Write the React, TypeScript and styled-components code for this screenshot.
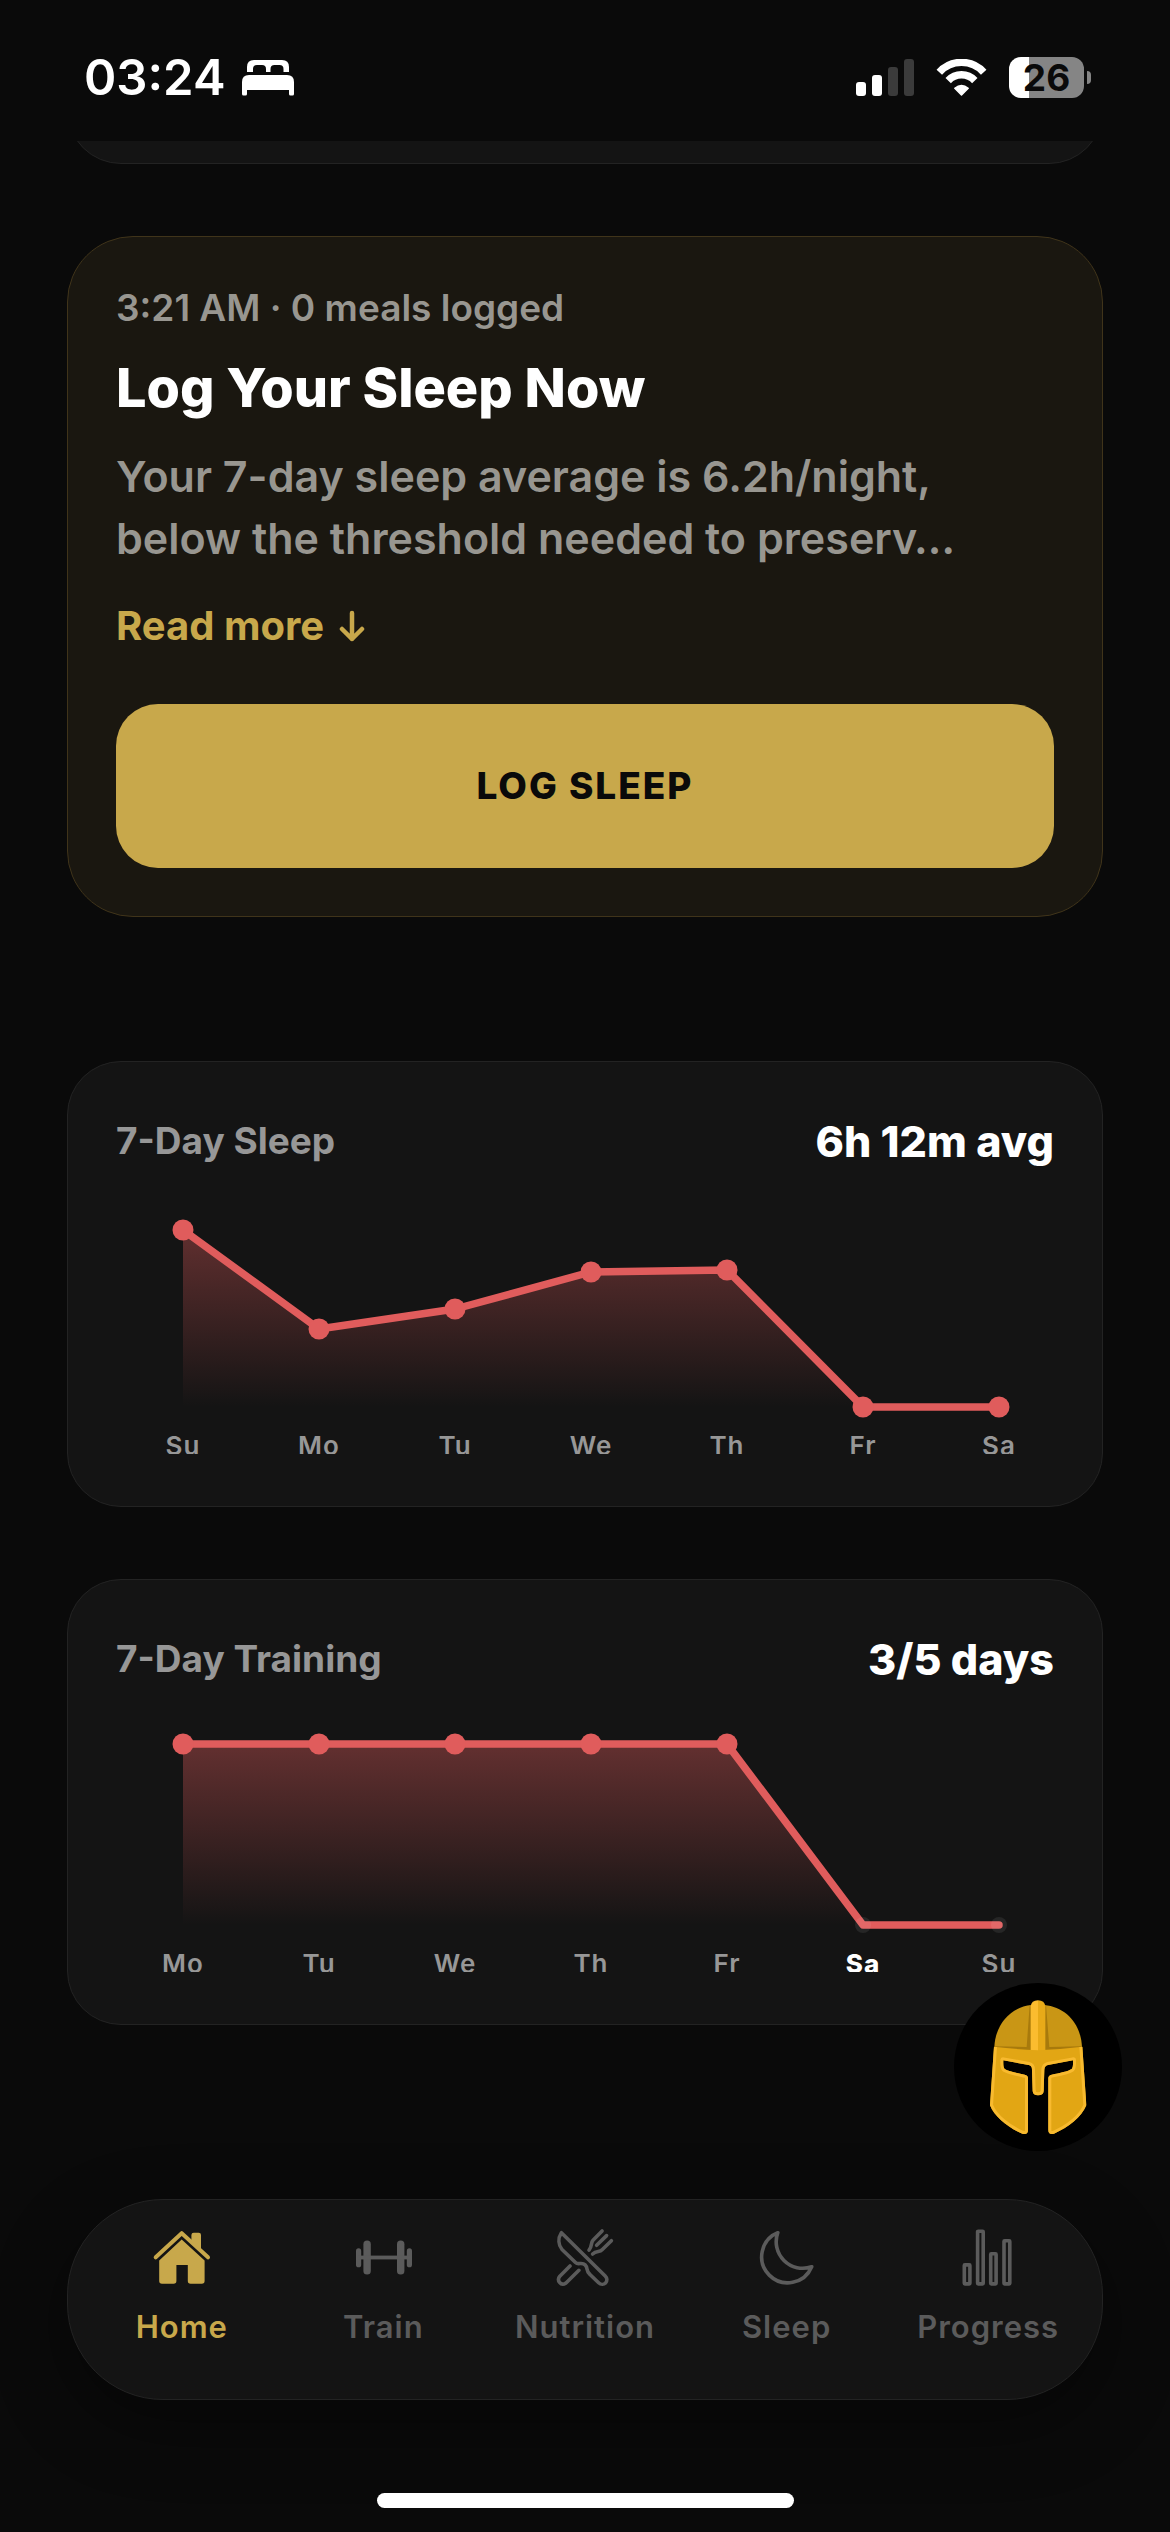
import React from "react";
import styled, { createGlobalStyle } from "styled-components";

const color = {
  page: "#0a0a0a",
  card: "#141414",
  line: "#232323",
  gold: "#c8a84b",
  heroBg: "#1a1710",
  heroLine: "#40341a",
  muted: "#979797",
  mutedWarm: "#989690",
  dim: "#5b5b5b",
  red: "#e05c5c",
  white: "#ffffff",
};

const GlobalStyle = createGlobalStyle`
  *, *::before, *::after { box-sizing: border-box; }
  body {
    margin: 0;
    background: ${color.page};
    color: ${color.white};
    font-family: Inter, "Liberation Sans", sans-serif;
  }
  h1, h2, p { margin: 0; }
  button { font-family: inherit; border: 0; padding: 0; cursor: pointer; }
`;

const Screen = styled.div`
  min-height: 100vh;
  display: flex;
  flex-direction: column;
`;

const StatusBar = styled.header`
  height: 141px;
  padding: 14px 79px 0 84px;
  display: flex;
  align-items: center;
  justify-content: space-between;
`;

const StatusGroup = styled.div<{ $gap: number }>`
  display: flex;
  align-items: center;
  gap: ${(p) => p.$gap}px;
`;

const Clock = styled.time`
  font-size: 49px;
  line-height: 60px;
  font-weight: 600;
`;

const Battery = styled.div`
  display: flex;
  align-items: center;
  gap: 3px;
`;

const BatteryBody = styled.div<{ $level: number }>`
  width: 75px;
  height: 41px;
  border-radius: 12px;
  background: linear-gradient(
    to right,
    ${color.white} ${(p) => p.$level}%,
    #858585 ${(p) => p.$level}%
  );
  color: ${color.page};
  font-size: 37px;
  line-height: 42px;
  font-weight: 700;
  text-align: center;
`;

const BatteryTip = styled.div`
  width: 4px;
  height: 13px;
  border-radius: 0 4px 4px 0;
  background: #858585;
`;

const Main = styled.main`
  padding: 0 67px;
  display: flex;
  flex-direction: column;
`;

const ScrolledAway = styled.div`
  height: 23px;
  overflow: hidden;
  display: flex;
  align-items: flex-end;
  margin-bottom: 72px;
`;

const Card = styled.section`
  width: 100%;
  background: ${color.card};
  border: 1px solid ${color.line};
  border-radius: 54px;
`;

const EmptyCard = styled(Card)`
  flex: none;
  height: 140px;
`;

const HeroCard = styled(Card)`
  padding: 48px;
  display: flex;
  flex-direction: column;
  align-items: flex-start;
  background: ${color.heroBg};
  border-color: ${color.heroLine};
  border-radius: 66px;
  margin-bottom: 144px;
`;

const Meta = styled.p`
  color: ${color.mutedWarm};
  font-size: 37px;
  line-height: 46px;
  font-weight: 600;
`;

const HeroTitle = styled.h1`
  margin-top: 24px;
  font-size: 54px;
  line-height: 66px;
  font-weight: 800;
`;

const HeroText = styled.p`
  margin-top: 24px;
  max-width: 900px;
  color: ${color.mutedWarm};
  font-size: 43px;
  line-height: 62px;
  font-weight: 600;
`;

const ReadMore = styled.button`
  margin-top: 34px;
  display: flex;
  align-items: center;
  gap: 15px;
  background: none;
  color: ${color.gold};
  font-size: 40px;
  line-height: 46px;
  font-weight: 700;
`;

const PrimaryButton = styled.button`
  margin-top: 55px;
  width: 100%;
  height: 164px;
  border-radius: 42px;
  background: ${color.gold};
  color: ${color.page};
  font-size: 37px;
  line-height: 46px;
  font-weight: 800;
  letter-spacing: 2px;
`;

const ChartCard = styled(Card)`
  padding: 48px 48px 52px;
  & + & { margin-top: 72px; }
`;

const ChartHeader = styled.div`
  display: flex;
  align-items: center;
  justify-content: space-between;
  line-height: 62px;
`;

const ChartTitle = styled.h2`
  color: ${color.muted};
  font-size: 37px;
  font-weight: 700;
`;

const ChartValue = styled.strong`
  font-size: 43px;
  font-weight: 800;
`;

const Plot = styled.svg`
  display: block;
  width: 100%;
  height: auto;
`;

const DayLabel = styled.text<{ $active: boolean }>`
  fill: ${(p) => (p.$active ? color.white : color.muted)};
  font-size: 26px;
  font-weight: ${(p) => (p.$active ? 800 : 600)};
  letter-spacing: 1px;
  text-anchor: middle;
`;

const Footer = styled.footer`
  position: relative;
  margin-top: auto;
  padding: 174px 67px 24px;
  display: flex;
  flex-direction: column;
  align-items: center;
`;

const TabBar = styled.nav`
  width: 100%;
  height: 201px;
  padding: 28px 13px 0;
  display: grid;
  grid-template-columns: repeat(5, 1fr);
  align-items: start;
  background: ${color.card};
  border: 1px solid ${color.line};
  border-radius: 96px;
  box-shadow: 0 24px 72px rgba(0, 0, 0, 0.4);
`;

const Tab = styled.a<{ $active?: boolean }>`
  display: flex;
  flex-direction: column;
  align-items: center;
  gap: 21px;
  color: ${(p) => (p.$active ? color.gold : color.dim)};
  font-size: 31px;
  line-height: 36px;
  font-weight: 600;
  letter-spacing: 1px;
  text-decoration: none;
`;

const CoachButton = styled.button`
  position: absolute;
  top: -42px;
  right: 48px;
  width: 168px;
  height: 168px;
  border-radius: 50%;
  background: #000;
`;

const HomeIndicator = styled.div`
  margin-top: 93px;
  width: 417px;
  height: 15px;
  border-radius: 8px;
  background: ${color.white};
`;

const BedIcon = () => (
  <svg width="52" height="36" viewBox="0 0 52 36" fill="#fff" aria-label="Sleep focus">
    <path d="M5 12V7q0-7 7-7h28q7 0 7 7v5h-5.500V9q0-4-4-4h-5q-4 0-4 4v3h-4.500V9q0-4-4-4h-5q-4 0-4 4v3z" />
    <path d="M0 34V22q0-7 7-7h38q7 0 7 7v12q0 1.500-1.500 1.500h-2q-1.500 0-1.500-1.500v-4H5v4q0 1.500-1.500 1.500h-2Q0 35.500 0 34z" />
  </svg>
);

const SignalIcon = () => (
  <svg width="58" height="37" viewBox="0 0 58 37" fill="#fff" aria-label="Signal">
    <rect x="0" y="23" width="10" height="14" rx="3" />
    <rect x="16" y="16" width="10" height="21" rx="3" />
    <rect x="32" y="8" width="10" height="29" rx="3" fill="#3b3b3b" />
    <rect x="48" y="0" width="10" height="37" rx="3" fill="#3b3b3b" />
  </svg>
);

const WifiIcon = () => (
  <svg width="51" height="37" viewBox="0 0 51 37" aria-label="Wi-Fi">
    <g fill="none" stroke="#fff" strokeWidth="7.400">
      <path d="M3.300 13.200A30 30 0 0 1 47.700 13.200" />
      <path d="M12.200 21.600A18.200 18.200 0 0 1 38.800 21.600" />
    </g>
    <path
      d="M25.500 36L18.800 29.300Q25.500 23.600 32.200 29.300Z"
      fill="#fff"
      stroke="#fff"
      strokeWidth="1.500"
      strokeLinejoin="round"
    />
  </svg>
);

const ArrowDown = () => (
  <svg width="26" height="32" viewBox="0 0 26 32" fill="none" stroke="currentColor" strokeWidth="4.500" strokeLinecap="round" strokeLinejoin="round" aria-hidden="true">
    <path d="M13 3V29M3 19L13 29L23 19" />
  </svg>
);

const TabIcon = ({ children }: { children: React.ReactNode }) => (
  <svg
    width="60"
    height="60"
    viewBox="0 0 60 60"
    fill="none"
    stroke="currentColor"
    strokeWidth="3.600"
    strokeLinecap="round"
    strokeLinejoin="round"
    aria-hidden="true"
  >
    {children}
  </svg>
);

const HomeIcon = () => (
  <TabIcon>
    <g fill="currentColor" stroke="none">
      <path d="M29.700 11.500L52.600 32.500V53q0 2.800-2.800 2.800H38.600q-2.800 0-2.800-2.800V37H24.400v16q0 2.800-2.800 2.800H10q-2.800 0-2.800-2.800V32.500z" />
      <path d="M39.400 13V7q0-2.300 2.300-2.300h5Q49 4.700 49 7v16z" />
    </g>
    <path d="M3.700 29.300L29.700 5.200L56 29.300" strokeWidth="4" />
  </TabIcon>
);

const TrainIcon = () => (
  <TabIcon>
    <g fill="currentColor" stroke="none">
      <rect x="3" y="20.300" width="5.200" height="19" rx="2.600" />
      <rect x="10.400" y="12.600" width="7.400" height="34" rx="3.600" />
      <rect x="44" y="12.600" width="7.400" height="34" rx="3.600" />
      <rect x="53.800" y="20.300" width="5.200" height="19" rx="2.600" />
      <rect x="5" y="27.600" width="52" height="3.800" />
    </g>
  </TabIcon>
);

const NutritionIcon = () => (
  <TabIcon>
    <path d="M6.400 4.700C2.600 10.500 3.500 17 7 21.500L20.500 34.500Q22 36 25 35.500C30 35 31.500 37.500 32 41Q32.500 44.500 35 46.500L43.600 54.700C46 57 49 56.500 50.500 55C52.500 52.800 52.200 50 50.200 48Z" />
    <path d="M15 38L4.800 48.200C1.500 52 5.500 58.800 11 55L23.900 42.300" />
    <path d="M47.100 3L38 12.300C35.500 15 37.500 18 34 22.200" />
    <path d="M56.400 12.700L47.100 21.800C44.500 24.500 41.500 22.300 37.600 26" />
    <path d="M51.600 7.600L41.600 17.300" />
  </TabIcon>
);

const SleepIcon = () => (
  <TabIcon>
    <path d="M20.800 4.700A26 26 0 1 0 54.700 38.700A26.500 26.500 0 0 1 20.800 4.700Z" />
  </TabIcon>
);

const ProgressIcon = () => (
  <TabIcon>
    <rect x="6.300" y="36.900" width="5.600" height="19" rx="0.600" />
    <rect x="19.600" y="3.200" width="5.600" height="52.700" rx="0.600" />
    <rect x="32.700" y="25.800" width="5.400" height="30.100" rx="0.600" />
    <rect x="46" y="12.800" width="5.800" height="43.100" rx="0.600" />
  </TabIcon>
);

const facePath =
  "M547 319L559 495C545 530 505 562 462 580Q445 585 445 568V414Q445 405 455 403C480 398 504 393 515 386Q520 381 519 360L444 374Q434 376 433 388L431 452Q430 465 414 465Q399 465 398 452L396 388Q396 376 386 374L310 360Q309 381 314 386C325 393 350 398 374 403Q384 405 384 414V568Q384 585 367 580C324 562 284 530 270 495L282 319";

const HelmetIcon = () => (
  <svg width="168" height="168" viewBox="162 128 504 504" aria-hidden="true">
    <defs>
      <clipPath id="helmet-face">
        <path d={facePath + "Q350 327 414 330Q480 327 547 319Z"} />
      </clipPath>
    </defs>
    <path d="M283 324C284 255 330 200 395 194H433C500 200 545 255 546 324Z" fill="#c99615" />
    <path d="M389 194L380 320L286 318L283 327L414 334L546 327L543 318L448 320L438 194Z" fill="#a87a0c" />
    <path d="M392 332V198Q394 180 414 180V332Z" fill="#fbbc2f" />
    <path d="M414 332V180Q434 180 436 198V332Z" fill="#e8aa18" />
    <path d={facePath + "Q350 327 414 330Q480 327 547 319Z"} fill="#e2a614" />
    <path
      d={facePath}
      fill="none"
      stroke="#f8ba2f"
      strokeWidth="18"
      strokeLinejoin="round"
      clipPath="url(#helmet-face)"
    />
  </svg>
);

type Point = { day: string; y: number; faint?: boolean; active?: boolean };

const sleepWeek: Point[] = [
  { day: "Su", y: 58 },
  { day: "Mo", y: 157 },
  { day: "Tu", y: 137 },
  { day: "We", y: 100 },
  { day: "Th", y: 98 },
  { day: "Fr", y: 235 },
  { day: "Sa", y: 235 },
];

const trainingWeek: Point[] = [
  { day: "Mo", y: 54 },
  { day: "Tu", y: 54 },
  { day: "We", y: 54 },
  { day: "Th", y: 54 },
  { day: "Fr", y: 54 },
  { day: "Sa", y: 235, faint: true, active: true },
  { day: "Su", y: 235, faint: true },
];

const plotX = (index: number) => 67 + index * 136;

const WeekChart = ({ id, title, value, points }: { id: string; title: string; value: string; points: Point[] }) => {
  const line = points.map((p, i) => `${plotX(i)},${p.y}`).join(" ");
  const area = `${plotX(0)},235 ${line} ${plotX(points.length - 1)},235`;
  return (
    <ChartCard>
      <ChartHeader>
        <ChartTitle>{title}</ChartTitle>
        <ChartValue>{value}</ChartValue>
      </ChartHeader>
      <Plot viewBox="0 0 938 282" role="img" aria-label={title}>
        <defs>
          <linearGradient id={id} gradientUnits="userSpaceOnUse" x1="0" y1="48" x2="0" y2="235">
            <stop offset="0" stopColor={color.red} stopOpacity="0.400" />
            <stop offset="1" stopColor={color.red} stopOpacity="0" />
          </linearGradient>
        </defs>
        <polygon points={area} fill={`url(#${id})`} />
        <polyline
          points={line}
          fill="none"
          stroke={color.red}
          strokeWidth="7.500"
          strokeLinecap="round"
          strokeLinejoin="round"
        />
        {points.map((p, i) => (
          <circle
            key={p.day}
            cx={plotX(i)}
            cy={p.y}
            r={p.faint ? 8 : 10.5}
            fill={p.faint ? "rgba(255,255,255,0.08)" : color.red}
          />
        ))}
        {points.map((p, i) => (
          <DayLabel key={p.day} x={plotX(i)} y={283} $active={!!p.active}>
            {p.day}
          </DayLabel>
        ))}
      </Plot>
    </ChartCard>
  );
};

const tabs = [
  { label: "Home", Icon: HomeIcon, active: true },
  { label: "Train", Icon: TrainIcon },
  { label: "Nutrition", Icon: NutritionIcon },
  { label: "Sleep", Icon: SleepIcon },
  { label: "Progress", Icon: ProgressIcon },
];

export default function App() {
  return (
    <>
      <GlobalStyle />
      <Screen>
        <StatusBar>
          <StatusGroup $gap={16}>
            <Clock>03:24</Clock>
            <BedIcon />
          </StatusGroup>
          <StatusGroup $gap={22}>
            <SignalIcon />
            <WifiIcon />
            <Battery>
              <BatteryBody $level={27}>26</BatteryBody>
              <BatteryTip />
            </Battery>
          </StatusGroup>
        </StatusBar>
        <Main>
          <ScrolledAway>
            <EmptyCard />
          </ScrolledAway>
          <HeroCard>
            <Meta>3:21 AM · 0 meals logged</Meta>
            <HeroTitle>Log Your Sleep Now</HeroTitle>
            <HeroText>
              Your 7-day sleep average is 6.2h/night, below the threshold needed to preserv…
            </HeroText>
            <ReadMore type="button">
              Read more
              <ArrowDown />
            </ReadMore>
            <PrimaryButton type="button">LOG SLEEP</PrimaryButton>
          </HeroCard>
          <WeekChart id="sleep-fill" title="7-Day Sleep" value="6h 12m avg" points={sleepWeek} />
          <WeekChart id="training-fill" title="7-Day Training" value="3/5 days" points={trainingWeek} />
        </Main>
        <Footer>
          <TabBar>
            {tabs.map(({ label, Icon, active }) => (
              <Tab key={label} href={`#${label.toLowerCase()}`} $active={active}>
                <Icon />
                {label}
              </Tab>
            ))}
          </TabBar>
          <CoachButton type="button" aria-label="Open coach">
            <HelmetIcon />
          </CoachButton>
          <HomeIndicator />
        </Footer>
      </Screen>
    </>
  );
}
